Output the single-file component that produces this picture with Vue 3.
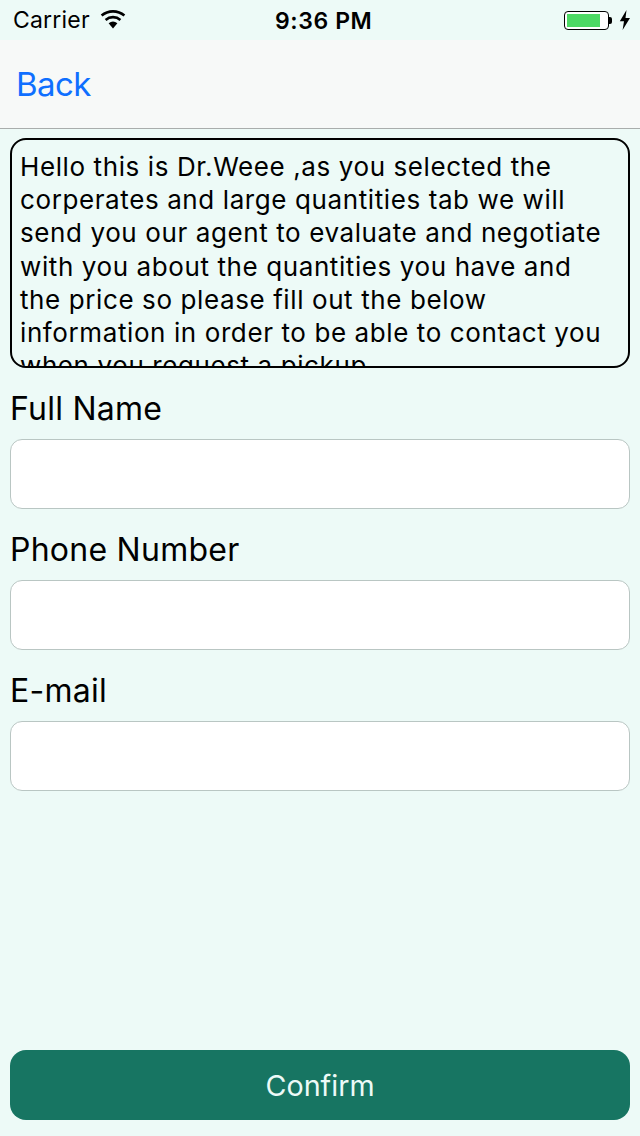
<script setup>
const fields = ['Full Name', 'Phone Number', 'E-mail']
const lines = [
  'Hello this is Dr.Weee ,as you selected the',
  'corperates and large quantities tab we will',
  'send you our agent to evaluate and negotiate',
  'with you about the quantities you have and',
  'the price so please fill out the below',
  'information in order to be able to contact you',
  'when you request a pickup'
]
</script>

<template>
  <div class="screen">
    <div class="status">
      <div class="status-left">
        <span class="carrier">Carrier</span>
        <svg class="wifi" width="26" height="19" viewBox="0 0 26 19">
          <path d="M13 18.5 8.6 13.2a7 7 0 0 1 8.8 0Z" fill="#000" />
          <path d="M5.6 9.9a11.4 11.4 0 0 1 14.8 0" fill="none" stroke="#000" stroke-width="2.6" />
          <path d="M1.6 5.6a17.6 17.6 0 0 1 22.8 0" fill="none" stroke="#000" stroke-width="2.6" />
        </svg>
      </div>
      <span class="time">9:36 PM</span>
      <div class="status-right">
        <div class="battery"><div class="battery-fill"></div></div>
        <div class="battery-tip"></div>
        <svg class="bolt" width="12" height="20" viewBox="0 0 12 20">
          <path d="M7.5 0 0.8 11.2H5L3.6 20 11 8H6.5Z" fill="#000" />
        </svg>
      </div>
    </div>
    <div class="nav"><span class="back">Back</span></div>
    <div class="main">
      <div class="message">
        <div v-for="line in lines" :key="line" class="line">{{ line }}</div>
      </div>
      <div v-for="field in fields" :key="field" class="field">
        <label class="label">{{ field }}</label>
        <div class="input"></div>
      </div>
      <button class="confirm">Confirm</button>
    </div>
  </div>
</template>

<style>
html, body { margin: 0; background: #edfaf7; }
</style>

<style scoped>
.screen {
  width: 640px;
  height: 1136px;
  display: flex;
  flex-direction: column;
  background: #edfaf7;
  color: #000;
  font-family: Inter, "Liberation Sans", sans-serif;
  overflow: hidden;
}
.status {
  height: 40px;
  flex: none;
  display: flex;
  align-items: center;
  justify-content: space-between;
  padding: 0 9px 0 13px;
  position: relative;
}
.status-left { display: flex; align-items: center; gap: 10px; }
.carrier { font-size: 23px; letter-spacing: 0.2px; }
.wifi { margin-top: -2px; }
.time {
  position: absolute;
  left: 275px;
  top: 8px;
  font-size: 23px;
  line-height: 26px;
  font-weight: 600;
  letter-spacing: 0.6px;
}
.status-right { display: flex; align-items: center; }
.battery {
  width: 45px;
  height: 19px;
  box-sizing: border-box;
  border: 1.5px solid #000;
  border-radius: 4px;
  padding: 2px;
  background: #fff;
}
.battery-fill { width: 33px; height: 100%; background: #4cd964; }
.battery-tip {
  width: 3px;
  height: 7px;
  background: #000;
  border-radius: 0 2px 2px 0;
  margin-right: 7px;
}
.nav {
  height: 89px;
  flex: none;
  box-sizing: border-box;
  background: #f7f9f8;
  border-bottom: 1px solid #a9adac;
  display: flex;
  align-items: center;
  padding-left: 16px;
}
.back { font-size: 33px; color: #0f6fff; letter-spacing: -0.6px; }
.main {
  flex: 1;
  display: flex;
  flex-direction: column;
  padding: 9px 10px 16px;
  min-height: 0;
}
.message {
  height: 230px;
  flex: none;
  box-sizing: border-box;
  border: 2px solid #000;
  border-radius: 16px;
  padding: 10px 8px 0;
  overflow: hidden;
  font-size: 26px;
  line-height: 33.2px;
  letter-spacing: 0.6px;
  white-space: nowrap;
}
.field { display: flex; flex-direction: column; }
.label {
  font-size: 32px;
  line-height: 40px;
  padding-top: 21px;
  height: 50px;
  letter-spacing: 0.25px;
}
.input {
  height: 70px;
  box-sizing: border-box;
  background: #fff;
  border: 1px solid #b9c6c3;
  border-radius: 12px;
}
.confirm {
  margin-top: auto;
  height: 70px;
  flex: none;
  border: 0;
  border-radius: 16px;
  background: #177562;
  color: #edfaf7;
  font-family: inherit;
  font-size: 28.7px;
}
</style>
